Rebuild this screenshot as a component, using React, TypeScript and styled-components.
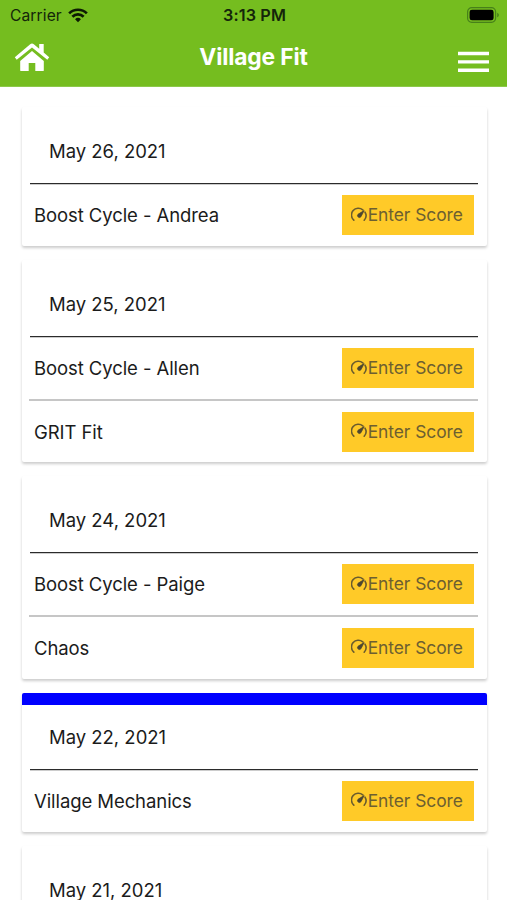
import React from "react";
import styled, { createGlobalStyle } from "styled-components";

const GlobalStyle = createGlobalStyle`
  *, *::before, *::after { box-sizing: border-box; }
  body {
    margin: 0;
    background: #fff;
    color: #1b1b1b;
    font-family: Inter, "Liberation Sans", sans-serif;
  }
`;

const Screen = styled.div`
  height: 900px;
  overflow: hidden;
  background: #fff;
`;

const Header = styled.header`
  height: 87px;
  background: #75bd1f;
  border-bottom: 1px solid #8cc94a;
`;

const StatusBar = styled.div`
  display: grid;
  grid-template-columns: 1fr auto 1fr;
  align-items: center;
  height: 30px;
  padding: 0 8px 0 10px;
  color: #14250a;
`;

const Carrier = styled.div`
  display: flex;
  align-items: center;
  gap: 6px;
  font-size: 15.6px;
  letter-spacing: 0.1px;
`;

const Clock = styled.div`
  font-size: 16.2px;
  font-weight: 600;
  letter-spacing: 0.15px;
`;

const BatteryIcon = styled.svg`
  justify-self: end;
`;

const NavBar = styled.div`
  display: grid;
  grid-template-columns: 1fr auto 1fr;
  align-items: center;
  height: 56px;
  padding: 0 18px 0 14px;
`;

const Title = styled.h1`
  margin: 0;
  padding: 0 0 2px 4px;
  font-size: 22.8px;
  font-weight: 700;
  line-height: 28px;
  letter-spacing: -0.16px;
  color: #fff;
`;

const NavButton = styled.button<{ $end?: boolean }>`
  display: flex;
  justify-self: ${(p) => (p.$end ? "end" : "start")};
  margin-top: ${(p) => (p.$end ? "8px" : "0")};
  padding: 0;
  border: 0;
  background: none;
`;

const DayList = styled.main`
  display: flex;
  flex-direction: column;
  gap: 14px;
  padding: 20.2px 20.5px 0 22px;
`;

const DayCard = styled.section<{ $accent: string }>`
  flex: none;
  padding: 0 8.5px 0 7px;
  border-top: 12px solid ${(p) => p.$accent};
  border-radius: 2px;
  background: #fff;
  box-shadow: 0 2px 3px rgba(0, 0, 0, 0.2);
`;

const DayDate = styled.h2`
  display: flex;
  align-items: center;
  height: 65px;
  margin: 0 0 0 1px;
  padding: 0 0 0 19px;
  font-size: 18.5px;
  font-weight: 400;
  letter-spacing: -0.02px;
  border-bottom: 1px solid #2b2b2b;
  box-shadow: 0 1px 0 rgba(0, 0, 0, 0.2);
`;

const ClassRow = styled.div`
  display: flex;
  align-items: center;
  justify-content: space-between;
  height: 62px;
  padding: 0 4px 0 5px;
  font-size: 18.5px;
  letter-spacing: -0.08px;

  & + & {
    height: 63.3px;
    padding-bottom: 0.6px;
    border-top: 2px solid #c6c6c6;
  }
`;

const ScoreButton = styled.button`
  display: flex;
  align-items: center;
  justify-content: center;
  width: 132px;
  height: 40px;
  padding: 0 2px 1px 0;
  border: 0;
  background: #ffca28;
  color: #6d5f31;
  font: inherit;
  font-size: 17.4px;
  letter-spacing: -0.06px;
`;

type Day = { date: string; classes: string[]; accent?: string };

const days: Day[] = [
  { date: "May 26, 2021", classes: ["Boost Cycle - Andrea"] },
  { date: "May 25, 2021", classes: ["Boost Cycle - Allen", "GRIT Fit"] },
  { date: "May 24, 2021", classes: ["Boost Cycle - Paige", "Chaos"] },
  { date: "May 22, 2021", classes: ["Village Mechanics"], accent: "#0000ff" },
  { date: "May 21, 2021", classes: [] },
];

const WifiIcon = () => (
  <svg width="20" height="15" viewBox="0 0 21 15" fill="none" stroke="#0d1a04" strokeWidth="2.8">
    <path d="M1.2 5.3a13.2 13.2 0 0 1 18.6 0" />
    <path d="M4.6 8.8a8.4 8.4 0 0 1 11.8 0" />
    <path d="M10.5 14.5 7.4 11.4a4.4 4.4 0 0 1 6.2 0z" fill="#0d1a04" stroke="none" />
  </svg>
);

const Battery = () => (
  <BatteryIcon width="32" height="16" viewBox="0 0 32 16">
    <rect x=".6" y=".6" width="28" height="14.8" rx="4.2" fill="none" stroke="#47801a" strokeWidth="1.2" />
    <rect x="2.6" y="2.7" width="24" height="10.6" rx="2.4" fill="#000" />
    <path d="M30.2 5.7c2.2.8 2.2 3.8 0 4.6z" fill="#47801a" />
  </BatteryIcon>
);

const HomeIcon = () => (
  <svg width="36" height="30" viewBox="0 0 36 30" fill="#fff">
    <path d="M18 8.1 6.2 17.9v9.3q0 .9.9.9h7.6V20h6.6v8.1h7.6q.9 0 .9-.9v-9.3z" />
    <path d="M19.8 1.2q-1.8-1.4-3.6 0L.8 14.2l1.9 2.6L18 4.4l15.3 12.4 1.9-2.6-5.5-4.7V.9h-4.5v4.8z" />
  </svg>
);

const MenuIcon = () => (
  <svg width="31" height="22" viewBox="0 0 31 22" fill="#fff">
    <path d="M0 .8h31v3.4H0zM0 9.2h31v3.4H0zM0 17.6h31v3.4H0z" />
  </svg>
);

const GaugeIcon = () => (
  <svg width="16.5" height="16" viewBox="0 0 16.5 16" fill="none" stroke="#6a5c2e" strokeWidth="1.6">
    <path d="M2.8 13.2A6.8 6.8 0 0 1 11.8 2.9M14 5.1A6.8 6.8 0 0 1 13.2 13.2" strokeLinecap="round" />
    <path d="m13.1 3.6-3.2 6.2a1.9 1.9 0 1 1-2.9-2.5z" fill="#4d4630" stroke="#4d4630" strokeWidth=".8" />
  </svg>
);

export default function App() {
  return (
    <Screen>
      <GlobalStyle />
      <Header>
        <StatusBar>
          <Carrier>
            Carrier
            <WifiIcon />
          </Carrier>
          <Clock>3:13 PM</Clock>
          <Battery />
        </StatusBar>
        <NavBar>
          <NavButton aria-label="Home">
            <HomeIcon />
          </NavButton>
          <Title>Village Fit</Title>
          <NavButton $end aria-label="Menu">
            <MenuIcon />
          </NavButton>
        </NavBar>
      </Header>
      <DayList>
        {days.map((day) => (
          <DayCard key={day.date} $accent={day.accent ?? "#fff"}>
            <DayDate>{day.date}</DayDate>
            {day.classes.map((name) => (
              <ClassRow key={name}>
                <span>{name}</span>
                <ScoreButton>
                  <GaugeIcon />
                  Enter Score
                </ScoreButton>
              </ClassRow>
            ))}
          </DayCard>
        ))}
      </DayList>
    </Screen>
  );
}
